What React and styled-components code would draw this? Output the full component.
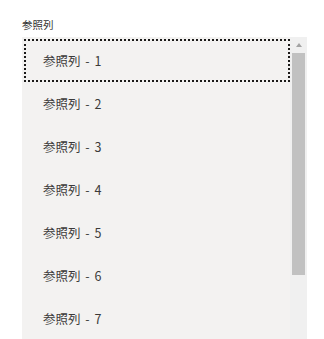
import React from "react";
import styled, { createGlobalStyle } from "styled-components";

const Global = createGlobalStyle`
  html, body { margin: 0; padding: 0; background: #fff; overflow: hidden; }
  body { font-family: "Noto Sans CJK JP", "Noto Sans", sans-serif; color: #323130; }
`;

const Page = styled.div`
  padding: 17px 17px 0 22px;
`;

const Label = styled.div`
  font-size: 10.5px;
  line-height: 16px;
  color: #323130;
  margin-bottom: 4px;
`;

const Box = styled.div`
  display: flex;
  background: #f3f2f1;
  height: 302px;
  overflow: hidden;
`;

const List = styled.div`
  flex: 1;
  display: flex;
  flex-direction: column;
  padding: 2px 0 0 2px;
`;

const Item = styled.div`
  height: 43px;
  flex: none;
  box-sizing: border-box;
  display: flex;
  align-items: center;
  padding-left: 17px;
  font-size: 12.5px;
  word-spacing: 2px;
  color: #3b3a39;
  border: 2px dotted ${(p) => (p.$focused ? "#1b1a19" : "transparent")};
`;

const Scrollbar = styled.div`
  width: 17px;
  flex: none;
  background: #f0f0f0;
  display: flex;
  flex-direction: column;
  align-items: center;
`;

const Arrow = styled.div`
  height: 16px;
  display: flex;
  align-items: center;
  justify-content: center;
  &::before {
    content: "";
    border-left: 3.5px solid transparent;
    border-right: 3.5px solid transparent;
    border-bottom: 4px solid #a3a3a3;
  }
`;

const Thumb = styled.div`
  width: 13px;
  height: 222px;
  background: #c1c1c1;
`;

const items = [1, 2, 3, 4, 5, 6, 7];

export default function App() {
  return (
    <>
      <Global />
      <Page>
        <Label>参照列</Label>
        <Box>
          <List>
            {items.map((n) => (
              <Item key={n} $focused={n === 1}>
                参照列 - {n}
              </Item>
            ))}
          </List>
          <Scrollbar>
            <Arrow />
            <Thumb />
          </Scrollbar>
        </Box>
      </Page>
    </>
  );
}
